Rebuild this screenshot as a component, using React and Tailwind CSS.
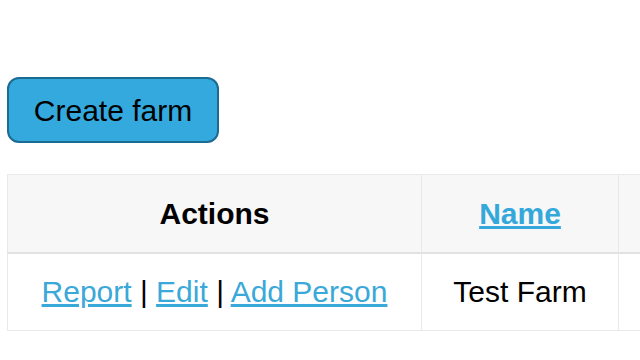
export default function App() {
  return (
    <div className="w-[640px] h-[360px] overflow-hidden bg-white font-['Liberation_Sans',Arial,sans-serif] text-black">
      <div className="pt-[77px] pl-[7px]">
        <button className="h-[66px] w-[212px] rounded-[12px] border-2 border-[#1c6b91] bg-[#33a9de] text-[30px] text-black">
          Create farm
        </button>
      </div>
      <table className="mt-[31px] ml-[7px] w-[700px] border-collapse text-[30px]">
        <thead>
          <tr className="h-[78px] bg-[#f7f7f7] border-b-2 border-[#e2e2e2]">
            <th className="w-[414px] border border-[#e9e9e9] font-bold">Actions</th>
            <th className="w-[197px] border border-[#e9e9e9] font-bold">
              <a className="text-[#35a8db] underline" href="#">Name</a>
            </th>
            <th className="border border-[#e9e9e9]"></th>
          </tr>
        </thead>
        <tbody>
          <tr className="h-[78px]">
            <td className="border border-[#e9e9e9] text-center">
              <a className="text-[#3aa8d8] underline" href="#">Report</a> |{" "}
              <a className="text-[#3aa8d8] underline" href="#">Edit</a> |{" "}
              <a className="text-[#3aa8d8] underline" href="#">Add Person</a>
            </td>
            <td className="border border-[#e9e9e9] text-center">Test Farm</td>
            <td className="border border-[#e9e9e9]"></td>
          </tr>
        </tbody>
      </table>
    </div>
  );
}
